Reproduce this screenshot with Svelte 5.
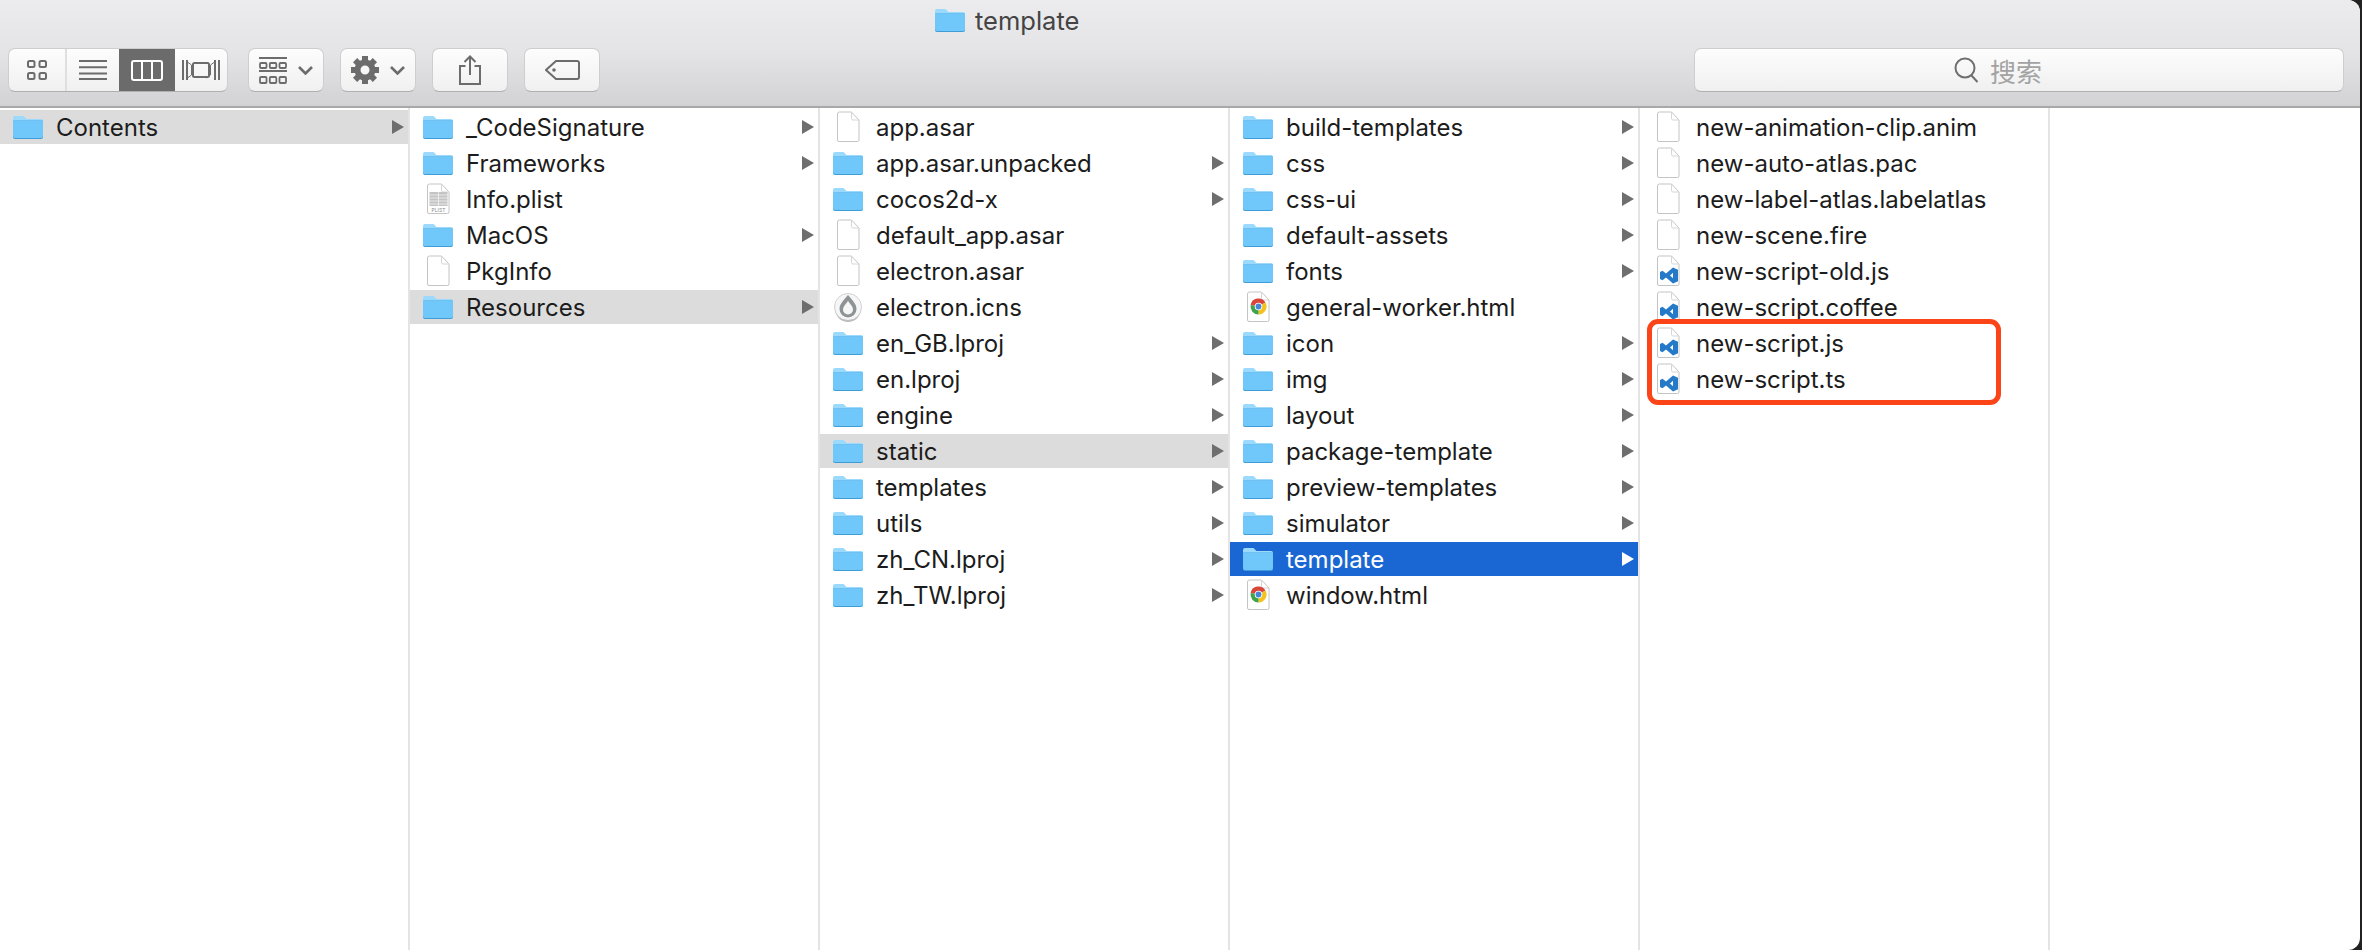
<script>
  const F = 'folder', D = 'file', V = 'vs', C = 'chrome';
  const columns = [
    [{ n: 'Contents', i: F, a: 1, s: 'gray' }],
    [
      { n: '_CodeSignature', i: F, a: 1 }, { n: 'Frameworks', i: F, a: 1 }, { n: 'Info.plist', i: 'plist' },
      { n: 'MacOS', i: F, a: 1 }, { n: 'PkgInfo', i: D }, { n: 'Resources', i: F, a: 1, s: 'gray' }
    ],
    [
      { n: 'app.asar', i: D }, { n: 'app.asar.unpacked', i: F, a: 1 }, { n: 'cocos2d-x', i: F, a: 1 },
      { n: 'default_app.asar', i: D }, { n: 'electron.asar', i: D }, { n: 'electron.icns', i: 'drop' },
      { n: 'en_GB.lproj', i: F, a: 1 }, { n: 'en.lproj', i: F, a: 1 }, { n: 'engine', i: F, a: 1 },
      { n: 'static', i: F, a: 1, s: 'gray' }, { n: 'templates', i: F, a: 1 }, { n: 'utils', i: F, a: 1 },
      { n: 'zh_CN.lproj', i: F, a: 1 }, { n: 'zh_TW.lproj', i: F, a: 1 }
    ],
    [
      { n: 'build-templates', i: F, a: 1 }, { n: 'css', i: F, a: 1 }, { n: 'css-ui', i: F, a: 1 },
      { n: 'default-assets', i: F, a: 1 }, { n: 'fonts', i: F, a: 1 }, { n: 'general-worker.html', i: C },
      { n: 'icon', i: F, a: 1 }, { n: 'img', i: F, a: 1 }, { n: 'layout', i: F, a: 1 },
      { n: 'package-template', i: F, a: 1 }, { n: 'preview-templates', i: F, a: 1 }, { n: 'simulator', i: F, a: 1 },
      { n: 'template', i: F, a: 1, s: 'blue' }, { n: 'window.html', i: C }
    ],
    [
      { n: 'new-animation-clip.anim', i: D }, { n: 'new-auto-atlas.pac', i: D },
      { n: 'new-label-atlas.labelatlas', i: D }, { n: 'new-scene.fire', i: D },
      { n: 'new-script-old.js', i: V }, { n: 'new-script.coffee', i: V },
      { n: 'new-script.js', i: V }, { n: 'new-script.ts', i: V }
    ],
    []
  ];
  const teeth = [0, 45, 90, 135, 180, 225, 270, 315];
</script>

{#snippet folder()}
  <svg class="ico" width="30" height="24" viewBox="0 0 30 24">
    <path d="M0 3a2 2 0 0 1 2-2h8.500l3 3H28a2 2 0 0 1 2 2v4H0z" fill="#9bdafc" />
    <path d="M0 6.500a1 1 0 0 1 1-1h28a1 1 0 0 1 1 1V22a2 2 0 0 1-2 2H2a2 2 0 0 1-2-2z" fill="#3f9cd6" />
    <path d="M0 6.500a1 1 0 0 1 1-1h28a1 1 0 0 1 1 1V21a2 2 0 0 1-2 2H2a2 2 0 0 1-2-2z" fill="#70c8fa" />
  </svg>
{/snippet}

{#snippet doc()}
  <path d="M1.500 3a2 2 0 0 1 2-2h12l7.500 8v20a1.500 1.500 0 0 1-1.500 1.500H3a1.500 1.500 0 0 1-1.500-1.500z" fill="#fff" stroke="#c4c4c4" />
  <path d="M15.500 1v6.500a1.500 1.500 0 0 0 1.500 1.500h6" fill="none" stroke="#d6d6d6" />
{/snippet}

{#snippet icon(kind)}
  {#if kind === 'folder'}
    {@render folder()}
  {:else if kind === 'file'}
    <svg class="ico" width="25" height="32" viewBox="0 0 25 32">{@render doc()}</svg>
  {:else if kind === 'plist'}
    <svg class="ico" width="25" height="32" viewBox="0 0 25 32">
      {@render doc()}
      <rect x="3.500" y="9" width="18" height="14" fill="#c4c4c4" />
      <path d="M3.500 12h18M3.500 15h18M3.500 18h18M3.500 21h18M12.500 9v14" stroke="#f2f2f2" stroke-width="0.800" />
      <text class="plist-t" x="12.500" y="29" text-anchor="middle">PLIST</text>
    </svg>
  {:else if kind === 'vs'}
    <svg class="ico" width="25" height="32" viewBox="0 0 25 32">
      {@render doc()}
      <path d="M17 12.500l5 2.200v11.600l-5 2.200-7-6-3.500 2.700-2.500-1.200v-7.100l2.500-1.200 3.500 2.700zM17 17.800l-3 2.700 3 2.700z" fill="#2479c8" fill-rule="evenodd" />
    </svg>
  {:else if kind === 'chrome'}
    <svg class="ico" width="25" height="32" viewBox="0 0 25 32">
      {@render doc()}
      <path d="M12.500 15.500L4.620 14.110A8 8 0 0 1 19.430 11.500z" fill="#d8453a" />
      <path d="M12.500 15.500L19.430 11.500A8 8 0 0 1 12.500 23.500z" fill="#f2c21f" />
      <path d="M12.500 15.500L12.500 23.500A8 8 0 0 1 4.620 14.110z" fill="#3fa34d" />
      <circle cx="12.500" cy="15.500" r="3.800" fill="#fff" />
      <circle cx="12.500" cy="15.500" r="2.900" fill="#4a86d8" />
    </svg>
  {:else}
    <svg class="ico" width="30" height="30" viewBox="0 0 30 30">
      <circle cx="15" cy="15" r="13.500" fill="#f6f6f6" stroke="#d2d2d2" />
      <path d="M2 17a13 13 0 0 0 26 0 13 11 0 0 1-26 0z" fill="#bdbdbd" />
      <path d="M15 3c5 6 8.500 9 8.500 14a8.500 8.500 0 0 1-17 0c0-5 3.500-8 8.500-14z" fill="#8e9496" />
      <path d="M15 9c3 4 5 6 5 8.500a5 5 0 0 1-10 0c0-2.500 2-4.500 5-8.500z" fill="#f6f6f6" />
    </svg>
  {/if}
{/snippet}

<div class="root">
  <div class="window">
    <header class="bar">
      <div class="title">
        {@render folder()}
        <span>template</span>
      </div>
      <div class="toolbar">
        <div class="seg">
          <div class="s1">
            <svg width="20" height="20" viewBox="0 0 20 20" fill="none" stroke="#6c6c6c" stroke-width="2">
              <rect x="1" y="1" width="6.500" height="6" rx="1.500" /><rect x="12.500" y="1" width="6.500" height="6" rx="1.500" />
              <rect x="1" y="13" width="6.500" height="6" rx="1.500" /><rect x="12.500" y="13" width="6.500" height="6" rx="1.500" />
            </svg>
          </div>
          <div class="s2">
            <svg width="28" height="20" viewBox="0 0 28 20" stroke="#6c6c6c" stroke-width="2">
              <path d="M0 1h28M0 7.300h28M0 13.600h28M0 19h28" />
            </svg>
          </div>
          <div class="s3">
            <svg width="32" height="21" viewBox="0 0 32 21" fill="none" stroke="#fff" stroke-width="2">
              <rect x="1" y="1" width="30" height="19" rx="2" /><path d="M11 1v19M21 1v19" />
            </svg>
          </div>
          <div class="s4">
            <svg width="38" height="22" viewBox="0 0 38 22" fill="none" stroke="#6c6c6c" stroke-width="2">
              <path d="M1 1v20M5 1v20M37 1v20M33 1v20" />
              <path d="M5.500 3l4 3v10l-4 3M32.500 3l-4 3v10l-4 3" stroke-width="1" />
              <rect x="11" y="4" width="16" height="14" rx="1.500" />
            </svg>
          </div>
        </div>
        <div class="btn">
          <svg width="28" height="27" viewBox="0 0 28 27" fill="none" stroke="#6c6c6c">
            <path d="M0 1h28M0 14h28" stroke-width="2" />
            <rect x="1" y="6" width="6.500" height="5" rx="1" stroke-width="1.800" /><rect x="10.800" y="6" width="6.500" height="5" rx="1" stroke-width="1.800" /><rect x="20.500" y="6" width="6.500" height="5" rx="1" stroke-width="1.800" />
            <rect x="1" y="20" width="6.500" height="6" rx="1" stroke-width="1.800" /><rect x="10.800" y="20" width="6.500" height="6" rx="1" stroke-width="1.800" /><rect x="20.500" y="20" width="6.500" height="6" rx="1" stroke-width="1.800" />
          </svg>
          <svg width="15" height="9" viewBox="0 0 15 9" fill="none" stroke="#6c6c6c" stroke-width="2.600"><path d="M1 1l6.500 6.500L14 1" /></svg>
        </div>
        <div class="btn">
          <svg width="28" height="28" viewBox="0 0 28 28">
            {#each teeth as t}
              <rect x="11" y="0" width="6" height="8" fill="#6c6c6c" transform={`rotate(${t} 14 14)`} />
            {/each}
            <circle cx="14" cy="14" r="7.500" fill="none" stroke="#6c6c6c" stroke-width="6" />
          </svg>
          <svg width="15" height="9" viewBox="0 0 15 9" fill="none" stroke="#6c6c6c" stroke-width="2.600"><path d="M1 1l6.500 6.500L14 1" /></svg>
        </div>
        <div class="btn">
          <svg width="22" height="30" viewBox="0 0 22 30" fill="none" stroke="#6c6c6c" stroke-width="2">
            <path d="M6.500 11H1v18h20V11h-5.500M11 20V1.500M5.500 7L11 1.500 16.500 7" />
          </svg>
        </div>
        <div class="btn">
          <svg width="35" height="20" viewBox="0 0 35 20" fill="none" stroke="#6c6c6c" stroke-width="2">
            <path d="M11 1h21a2 2 0 0 1 2 2v14a2 2 0 0 1-2 2H11L1 10z" />
            <circle cx="9" cy="10" r="1.800" fill="#6c6c6c" stroke="none" />
          </svg>
        </div>
        <div class="search">
          <svg width="25" height="26" viewBox="0 0 25 26" fill="none" stroke="#6f6f6f" stroke-width="2">
            <circle cx="11" cy="11" r="9.500" /><path d="M17 18l6.500 7" />
          </svg>
          <span>搜索</span>
        </div>
      </div>
    </header>

    <main class="browser">
      {#each columns as col}
        <section class="col">
          {#each col as row}
            <div class="row">
              <div class="cell {row.s ?? ''}">
                <div class="ibox">{@render icon(row.i)}</div>
                <span class="name">{row.n}</span>
                {#if row.a}<i class="arrow"></i>{/if}
              </div>
            </div>
          {/each}
        </section>
      {/each}
      <div class="mark"></div>
    </main>
  </div>
</div>

<style>
  :global(body) { margin: 0; background: #fff; }
  .root {
    width: 2362px;
    height: 950px;
    background: linear-gradient(90deg, #fff 98%, #222 98%);
    font-family: Inter, "Liberation Sans", Arial, sans-serif;
    overflow: hidden;
  }
  .window {
    width: 2360px;
    height: 950px;
    display: flex;
    flex-direction: column;
    background: #fff;
    border-radius: 0 12px 12px 0;
    overflow: hidden;
  }
  .bar {
    height: 106px;
    flex: none;
    background: linear-gradient(#ecebed, #e4e3e5 50%, #d2d1d3);
    border-bottom: 2px solid #a9a8a9;
  }
  .title {
    height: 48px;
    display: flex;
    align-items: flex-start;
    gap: 10px;
    padding: 8px 0 0 935px;
    box-sizing: border-box;
    font-size: 25.500px;
    line-height: 26px;
    color: #444;
  }
  .toolbar {
    display: flex;
    height: 44px;
    padding: 0 16px 0 8px;
    gap: 20px;
  }
  .seg, .btn, .search {
    height: 44px;
    box-sizing: border-box;
    background: linear-gradient(#fdfdfd, #f0f0f0);
    border: 1px solid #cfcdcf;
    border-bottom-color: #b0aeb0;
    border-radius: 7px;
  }
  .seg { width: 220px; display: flex; overflow: hidden; }
  .seg > div { display: flex; align-items: center; justify-content: center; box-sizing: border-box; }
  .s1 { width: 58px; border-right: 2px solid #dfdfdf; }
  .s2 { width: 52px; }
  .s3 { width: 56px; background: #6b6b6b; }
  .s4 { flex: 1; }
  .btn {
    width: 76px;
    display: flex;
    align-items: center;
    justify-content: center;
    gap: 11px;
  }
  .btn + .btn { margin-left: -4px; }
  .search {
    width: 650px;
    margin-left: auto;
    display: flex;
    align-items: center;
    justify-content: center;
    gap: 11px;
    padding-right: 42px;
    font-family: "Liberation Sans", "Noto Sans CJK SC", sans-serif;
    font-size: 26px;
    color: #a3a3a3;
  }
  .browser { flex: 1; display: flex; position: relative; }
  .col {
    width: 408px;
    flex: none;
    border-right: 2px solid #e4e4e4;
  }
  .col:last-of-type { flex: 1; border-right: 0; }
  .row { height: 36px; padding-top: 2px; box-sizing: border-box; }
  .cell {
    height: 34px;
    display: flex;
    align-items: center;
    padding: 0 4px 0 13px;
    font-size: 24px;
    color: #1c1c1c;
  }
  .cell.gray { background: #dcdcdc; }
  .cell.blue { background: #1a67d3; color: #fff; }
  .ibox {
    width: 30px;
    height: 32px;
    margin-right: 13px;
    flex: none;
    display: flex;
    align-items: center;
    justify-content: center;
  }
  .ico { display: block; }
  .plist-t { font-size: 5px; fill: #8a8a8a; }
  .name { white-space: nowrap; }
  .arrow {
    width: 0;
    height: 0;
    margin-left: auto;
    border-left: 12px solid #6e6e6e;
    border-top: 7px solid transparent;
    border-bottom: 7px solid transparent;
  }
  .blue .arrow { border-left-color: #fff; }
  .mark {
    position: absolute;
    left: 1647px;
    top: 211px;
    width: 354px;
    height: 86px;
    box-sizing: border-box;
    border: 5px solid #fc4419;
    border-radius: 11px;
  }
</style>
